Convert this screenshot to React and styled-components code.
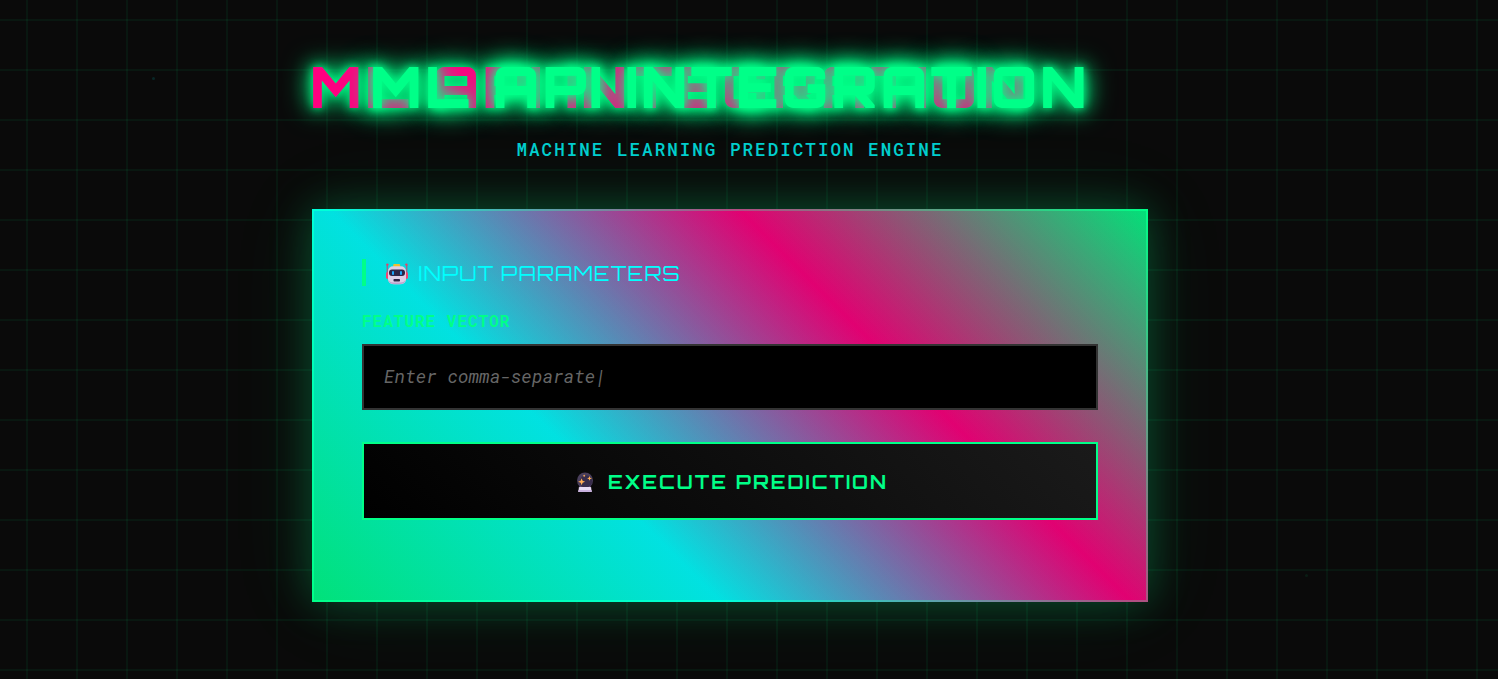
import React from "react";
import styled, { createGlobalStyle } from "styled-components";

const display = `"Orbitron", "DejaVu Sans", sans-serif`;
const mono = `"Roboto Mono", "DejaVu Sans Mono", monospace`;

const Global = createGlobalStyle`
  * { box-sizing: border-box; }
  body { margin: 0; background: #0a0a0a; overflow: hidden; }
`;

const Page = styled.main`
  position: relative;
  height: 679px;
  overflow: hidden;
  display: flex;
  flex-direction: column;
  align-items: center;
  padding: 47px 38px 0 0;
  isolation: isolate;
  background: #0a0a0a;
`;

const Grid = styled.div`
  position: absolute;
  inset: 0;
  z-index: -2;
  background-image:
    linear-gradient(rgba(0, 255, 136, 0.055) 2px, transparent 2px),
    linear-gradient(90deg, rgba(0, 255, 136, 0.055) 2px, transparent 2px);
  background-size: 50px 50px;
  background-position: 26px 19px;
`;

const Particle = styled.i`
  position: absolute;
  left: ${(p) => p.$x}px;
  top: ${(p) => p.$y}px;
  width: 3px;
  height: 3px;
  border-radius: 50%;
  background: ${(p) => p.$color};
`;

const Title = styled.h1`
  position: relative;
  width: 840px;
  height: 79px;
  margin: 0;
  padding-left: 60px;
  font: 900 56px/79px ${display};
  letter-spacing: 3px;
  white-space: nowrap;
  color: #00ff88;
  text-shadow: 0 0 10px #00ff88, 0 0 20px #00ff88, 0 0 30px #00ff88;
  &::before {
    content: "ML API INTEGRATION";
    position: absolute;
    left: 0;
    top: 0;
    z-index: -1;
    color: #ff0080;
  }
`;

const Subtitle = styled.p`
  margin: 11px 0 47px;
  font: 500 17.6px/25px ${mono};
  letter-spacing: 2px;
  color: #00ffff;
  opacity: 0.8;
`;

const Card = styled.section`
  width: 836px;
  height: 393px;
  padding: 48px;
  border: 2px solid rgba(0, 255, 136, 0.3);
  background:
    linear-gradient(rgba(10, 10, 10, 0.12), rgba(10, 10, 10, 0.12)) padding-box,
    linear-gradient(45deg, #00ff88, #00ffff, #ff0080, #00ff88) border-box;
  box-shadow: 0 0 40px rgba(0, 255, 136, 0.24), 0 0 80px rgba(0, 255, 136, 0.1);
`;

const Heading = styled.h2`
  display: flex;
  align-items: center;
  gap: 10px;
  height: 27px;
  margin: 0 0 23px;
  padding: 2px 0 0 20px;
  border-left: 4px solid #00ff88;
  font: 400 20.8px/25px ${display};
  letter-spacing: 1px;
  color: #00ffff;
`;

const Label = styled.label`
  display: block;
  height: 24px;
  margin-bottom: 11px;
  font: 700 16px/24px ${mono};
  letter-spacing: 1px;
  color: #00ff88;
`;

const Field = styled.input`
  display: block;
  width: 100%;
  height: 66px;
  padding: 0 20px 2px;
  border: 2px solid #333;
  border-radius: 0;
  outline: 0;
  background: #000;
  font: 400 18px ${mono};
  &::placeholder { color: #666; font-style: italic; opacity: 1; }
`;

const Button = styled.button`
  display: flex;
  align-items: center;
  justify-content: center;
  gap: 14px;
  width: 100%;
  height: 78px;
  margin-top: 32px;
  padding: 2px 4px 0 8px;
  border: 2px solid #00ff88;
  background: linear-gradient(45deg, #000, #1a1a1a);
  font: 700 19.2px ${display};
  letter-spacing: 2px;
  color: #00ff88;
`;

const Robot = () => (
  <svg width="22" height="22" viewBox="0 0 22 22" aria-hidden="true">
    <path d="M1.2 2v10M20.8 2v10" stroke="#c9416f" strokeWidth="1" />
    <circle cx="1.4" cy="1.6" r="1.2" fill="#f03c68" />
    <circle cx="20.4" cy="1.6" r="1.2" fill="#f03c68" />
    <rect x="0" y="9" width="4" height="7" rx="1.8" fill="#f04674" />
    <rect x="18" y="9" width="4" height="7" rx="1.8" fill="#f04674" />
    <rect x="7.2" y="1" width="7" height="4" rx="1" fill="#efbd32" />
    <rect x="2" y="3.2" width="18" height="18" rx="5" fill="#dccfe6" />
    <path d="M2.2 16c1 5 3 5.200 8.800 5.200s7.800-.2 8.800-5.200c-1 3-3 3.500-8.800 3.500S3.200 19 2.200 16" fill="#bda4cf" />
    <rect x="3" y="6.5" width="16" height="6.6" rx="3" fill="#2c2647" />
    <rect x="6" y="8" width="2" height="4" rx="1" fill="#1ca7fb" />
    <rect x="14" y="8" width="2" height="4" rx="1" fill="#1ca7fb" />
    <rect x="7.5" y="16" width="6.5" height="2.5" rx=".8" fill="#2c2647" />
  </svg>
);

const CrystalBall = () => (
  <svg width="18" height="21" viewBox="0 0 18 21" aria-hidden="true">
    <circle cx="9" cy="8.5" r="8" fill="#4a3f5c" />
    <circle cx="10" cy="9.5" r="6.2" fill="#382d4b" />
    <path d="M3 13.5c3 2.5 9 2.5 12 0l-2 3H5z" fill="#6c4d85" />
    <path d="M3.500 15h11q.5 0 .6.6l.6 4.400H2.300l.6-4.400q.1-.6.6-.6z" fill="#e8dcf4" />
    <path d="M2.500 18h13l.2 2H2.300z" fill="#c9b1df" />
    <path d="M5.600 6.200l1 2.500 2.500 1-2.500 1-1 2.500-1-2.500-2.500-1 2.500-1zM13.500 4l.7 1.700 1.700.7-1.700.7-.7 1.700-.7-1.700-1.700-.7 1.700-.7z" fill="#ffae55" />
    <circle cx="8.200" cy="3.800" r="1" fill="#e7a05b" />
  </svg>
);

export default function App() {
  return (
    <Page>
      <Global />
      <Grid />
      <Particle $x={152} $y={77} $color="rgba(0,255,255,.12)" />
      <Particle $x={1305} $y={574} $color="rgba(0,255,136,.08)" />
      <Title>ML API INTEGRATION</Title>
      <Subtitle>MACHINE LEARNING PREDICTION ENGINE</Subtitle>
      <Card>
        <Heading><Robot /> INPUT PARAMETERS</Heading>
        <Label htmlFor="features">FEATURE VECTOR</Label>
        <Field id="features" placeholder="Enter comma-separate|" />
        <Button><CrystalBall /> EXECUTE PREDICTION</Button>
      </Card>
    </Page>
  );
}
